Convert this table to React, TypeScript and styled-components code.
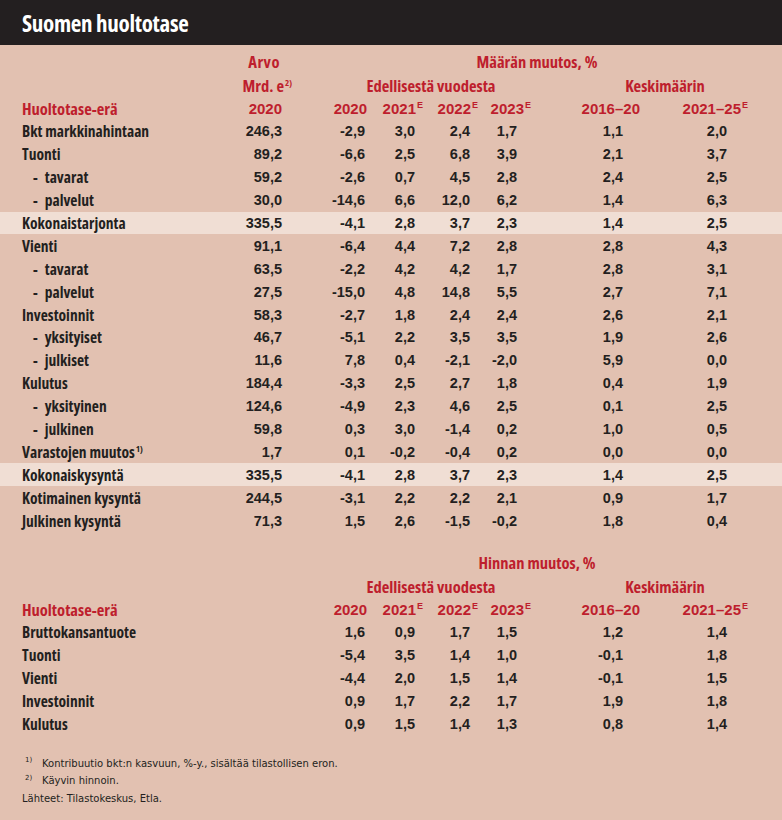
import React from 'react';
import styled, { createGlobalStyle } from 'styled-components';

const GlobalStyle = createGlobalStyle`
  html, body {
    margin: 0;
    padding: 0;
    background: #e2c1b1;
  }
`;

const NARROW = `"Open Sans", "DejaVu Sans Condensed", sans-serif`;
const WIDE = `"Liberation Sans", Arial, sans-serif`;
const RED = '#be1e2d';
const INK = '#231f20';

const Page = styled.div`
  min-height: 820px;
  background: #e2c1b1;
  color: ${INK};
  display: flex;
  flex-direction: column;
`;

const TitleBar = styled.header`
  height: 45px;
  background: #231f20;
  color: #fff;
  display: flex;
  align-items: center;
  padding-left: 22px;
  font-family: ${NARROW};
  font-stretch: 75%;
  font-weight: 700;
  font-size: 23px;
  letter-spacing: -0.3px;
`;

const Table = styled.section<{ $top: number }>`
  display: flex;
  flex-direction: column;
  padding-top: ${p => p.$top}px;
`;

const Row = styled.div<{ $highlight?: boolean; $h?: number }>`
  display: grid;
  grid-template-columns: 208px 52px 85px 56px 55px 50px 112px 108px;
  align-items: center;
  height: ${p => p.$h ?? 22.9}px;
  padding-left: 22px;
  background: ${p => (p.$highlight ? '#f0ded4' : 'transparent')};
`;

const Label = styled.div<{ $indent?: boolean }>`
  font-family: ${NARROW};
  font-stretch: 75%;
  font-weight: 700;
  font-size: 15.5px;
  padding-left: ${p => (p.$indent ? '11px' : '0')};
  white-space: nowrap;
`;

const Dash = styled.span`
  margin-right: 7px;
`;

const Num = styled.div<{ $mr: number }>`
  font-family: ${WIDE};
  font-weight: 700;
  font-size: 14.5px;
  text-align: right;
  margin-right: ${p => p.$mr}px;
  white-space: nowrap;
`;

const Head = styled.div<{ $mr?: number; $narrow?: boolean; $spacing?: number }>`
  font-family: ${p => (p.$narrow ? NARROW : WIDE)};
  font-stretch: ${p => (p.$narrow ? '75%' : 'normal')};
  font-weight: 700;
  font-size: ${p => (p.$narrow ? '16.5px' : '15px')};
  letter-spacing: ${p => p.$spacing ?? 0}px;
  color: ${RED};
  text-align: right;
  margin-right: ${p => p.$mr ?? 0}px;
  white-space: nowrap;
`;

const HeadLabel = styled(Label)`
  color: ${RED};
  font-size: 16.5px;
`;

const Group = styled.div<{ $from: number; $to: number; $pl: number }>`
  grid-column: ${p => p.$from} / ${p => p.$to};
  padding-left: ${p => p.$pl}px;
  text-align: center;
  font-family: ${NARROW};
  font-stretch: 75%;
  font-weight: 700;
  font-size: 16.5px;
  color: ${RED};
  white-space: nowrap;
`;

const Sup = styled.sup`
  font-size: 9px;
  vertical-align: 6px;
  line-height: 0;
  margin-left: 1px;
`;

const Notes = styled.footer`
  padding: 19px 0 0 22px;
  font-family: "DejaVu Sans", sans-serif;
  font-size: 10px;
  color: ${INK};
  display: flex;
  flex-direction: column;
`;

const NoteLine = styled.div`
  display: flex;
  align-items: center;
  height: 17.5px;
`;

const NoteMark = styled.span`
  flex: 0 0 20px;
  padding-left: 3px;
  box-sizing: border-box;
  font-size: 7px;
  align-self: flex-start;
  padding-top: 2px;
`;

// right offset of the figures within each column
const NUM_MR = [0, 2, 8, 8, 11, 17, 21];

type Line = { label: string; vals: string[]; indent?: boolean; hi?: boolean; note?: string };

const volume: Line[] = [
  { label: 'Bkt markkinahintaan', vals: ['246,3', '-2,9', '3,0', '2,4', '1,7', '1,1', '2,0'] },
  { label: 'Tuonti', vals: ['89,2', '-6,6', '2,5', '6,8', '3,9', '2,1', '3,7'] },
  { label: 'tavarat', indent: true, vals: ['59,2', '-2,6', '0,7', '4,5', '2,8', '2,4', '2,5'] },
  { label: 'palvelut', indent: true, vals: ['30,0', '-14,6', '6,6', '12,0', '6,2', '1,4', '6,3'] },
  { label: 'Kokonaistarjonta', hi: true, vals: ['335,5', '-4,1', '2,8', '3,7', '2,3', '1,4', '2,5'] },
  { label: 'Vienti', vals: ['91,1', '-6,4', '4,4', '7,2', '2,8', '2,8', '4,3'] },
  { label: 'tavarat', indent: true, vals: ['63,5', '-2,2', '4,2', '4,2', '1,7', '2,8', '3,1'] },
  { label: 'palvelut', indent: true, vals: ['27,5', '-15,0', '4,8', '14,8', '5,5', '2,7', '7,1'] },
  { label: 'Investoinnit', vals: ['58,3', '-2,7', '1,8', '2,4', '2,4', '2,6', '2,1'] },
  { label: 'yksityiset', indent: true, vals: ['46,7', '-5,1', '2,2', '3,5', '3,5', '1,9', '2,6'] },
  { label: 'julkiset', indent: true, vals: ['11,6', '7,8', '0,4', '-2,1', '-2,0', '5,9', '0,0'] },
  { label: 'Kulutus', vals: ['184,4', '-3,3', '2,5', '2,7', '1,8', '0,4', '1,9'] },
  { label: 'yksityinen', indent: true, vals: ['124,6', '-4,9', '2,3', '4,6', '2,5', '0,1', '2,5'] },
  { label: 'julkinen', indent: true, vals: ['59,8', '0,3', '3,0', '-1,4', '0,2', '1,0', '0,5'] },
  { label: 'Varastojen muutos', note: '1)', vals: ['1,7', '0,1', '-0,2', '-0,4', '0,2', '0,0', '0,0'] },
  { label: 'Kokonaiskysyntä', hi: true, vals: ['335,5', '-4,1', '2,8', '3,7', '2,3', '1,4', '2,5'] },
  { label: 'Kotimainen kysyntä', vals: ['244,5', '-3,1', '2,2', '2,2', '2,1', '0,9', '1,7'] },
  { label: 'Julkinen kysyntä', vals: ['71,3', '1,5', '2,6', '-1,5', '-0,2', '1,8', '0,4'] },
];

const price: Line[] = [
  { label: 'Bruttokansantuote', vals: ['', '1,6', '0,9', '1,7', '1,5', '1,2', '1,4'] },
  { label: 'Tuonti', vals: ['', '-5,4', '3,5', '1,4', '1,0', '-0,1', '1,8'] },
  { label: 'Vienti', vals: ['', '-4,4', '2,0', '1,5', '1,4', '-0,1', '1,5'] },
  { label: 'Investoinnit', vals: ['', '0,9', '1,7', '2,2', '1,7', '1,9', '1,8'] },
  { label: 'Kulutus', vals: ['', '0,9', '1,5', '1,4', '1,3', '0,8', '1,4'] },
];

function YearHeads({ withValue }: { withValue: boolean }) {
  return (
    <>
      <Head>{withValue ? '2020' : ''}</Head>
      <Head>2020</Head>
      <Head>2021<Sup>E</Sup></Head>
      <Head>2022<Sup>E</Sup></Head>
      <Head $mr={-3}>2023<Sup>E</Sup></Head>
      <Head>2016–20</Head>
      <Head>2021–25<Sup>E</Sup></Head>
    </>
  );
}

function GroupHeads({ title, withValue }: { title: string; withValue: boolean }) {
  return (
    <>
      <Row $h={23.5}>
        <div />
        <Head $narrow $mr={2} $spacing={0.5}>{withValue ? 'Arvo' : ''}</Head>
        <Group $from={3} $to={9} $pl={44}>{title}</Group>
      </Row>
      <Row $h={23.5}>
        <div />
        <Head $narrow $mr={-10}>{withValue && <>Mrd. e<Sup>2)</Sup></>}</Head>
        <Group $from={3} $to={7} $pl={52}>Edellisestä vuodesta</Group>
        <Group $from={7} $to={9} $pl={54}>Keskimäärin</Group>
      </Row>
    </>
  );
}

function DataRows({ lines }: { lines: Line[] }) {
  return (
    <>
      {lines.map((l, i) => (
        <Row key={i} $highlight={l.hi}>
          <Label $indent={l.indent}>
            {l.indent && <Dash>-</Dash>}
            {l.label}
            {l.note && <Sup>{l.note}</Sup>}
          </Label>
          {l.vals.map((v, j) => (
            <Num key={j} $mr={NUM_MR[j]}>{v}</Num>
          ))}
        </Row>
      ))}
    </>
  );
}

export default function App() {
  return (
    <Page>
      <GlobalStyle />
      <TitleBar>Suomen huoltotase</TitleBar>

      <Table $top={5}>
        <GroupHeads title="Määrän muutos, %" withValue />
        <Row $h={23}>
          <HeadLabel>Huoltotase-erä</HeadLabel>
          <YearHeads withValue />
        </Row>
        <DataRows lines={volume} />
      </Table>

      <Table $top={19}>
        <GroupHeads title="Hinnan muutos, %" withValue={false} />
        <Row $h={23}>
          <HeadLabel>Huoltotase-erä</HeadLabel>
          <YearHeads withValue={false} />
        </Row>
        <DataRows lines={price} />
      </Table>

      <Notes>
        <NoteLine><NoteMark>1)</NoteMark>Kontribuutio bkt:n kasvuun, %-y., sisältää tilastollisen eron.</NoteLine>
        <NoteLine><NoteMark>2)</NoteMark>Käyvin hinnoin.</NoteLine>
        <NoteLine>Lähteet: Tilastokeskus, Etla.</NoteLine>
      </Notes>
    </Page>
  );
}
